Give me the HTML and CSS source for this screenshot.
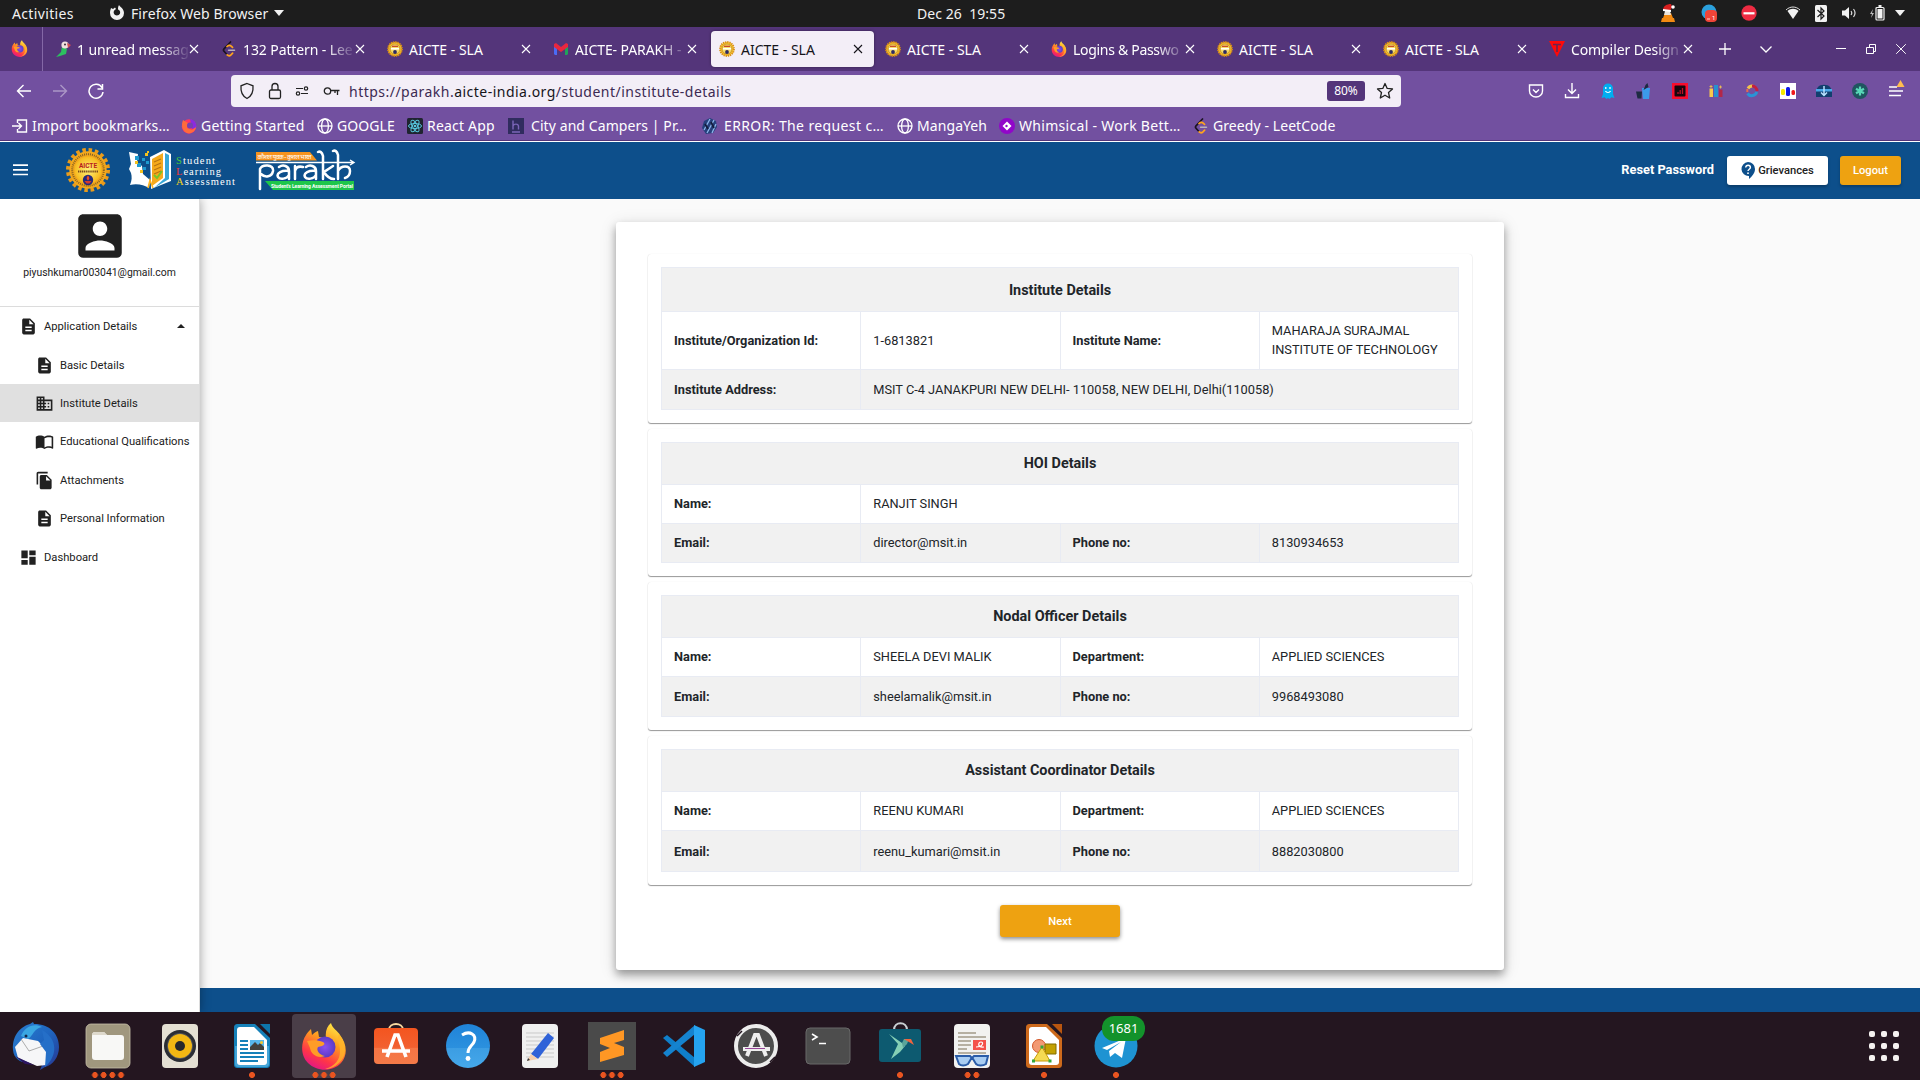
FILE: index.html
```html
<!DOCTYPE html>
<html lang="en">
<head>
<meta charset="utf-8">
<title>AICTE - SLA</title>
<link rel="stylesheet" href="styles.css">
</head>
<body>
<svg class="defs" width="0" height="0" aria-hidden="true">
  <defs>
    <linearGradient id="gFox" x1=".8" y1="0" x2=".3" y2="1"><stop offset="0" stop-color="#fff14a"/><stop offset=".4" stop-color="#ff9a1f"/><stop offset=".75" stop-color="#ff3647"/><stop offset="1" stop-color="#e31587"/></linearGradient>
    <radialGradient id="gOrb"><stop offset="0" stop-color="#8a4ff0"/><stop offset="1" stop-color="#5b3bc4"/></radialGradient>
    <linearGradient id="gBlue" x1="0" y1="0" x2="0" y2="1"><stop offset="0" stop-color="#1f83d8"/><stop offset=".54" stop-color="#2b90de"/><stop offset=".55" stop-color="#3c9de3"/><stop offset="1" stop-color="#45a8ea"/></linearGradient>
    <linearGradient id="gOrange" x1="0" y1="0" x2="0" y2="1"><stop offset="0" stop-color="#f4551f"/><stop offset=".54" stop-color="#f26030"/><stop offset=".55" stop-color="#f57444"/><stop offset="1" stop-color="#f47a48"/></linearGradient>
    <radialGradient id="gGold"><stop offset="0" stop-color="#fff27a"/><stop offset="1" stop-color="#f7b91d"/></radialGradient>
    <linearGradient id="gBird" x1="0" y1="0" x2="1" y2="1"><stop offset="0" stop-color="#2a7fd0"/><stop offset=".5" stop-color="#1f66c0"/><stop offset="1" stop-color="#27348f"/></linearGradient>
  </defs>
  <symbol id="fox" viewBox="0 0 48 48">
    <path d="M31 1c1 5 7 8 9 12 7 9 8 20 1 28-8 9-24 9-33 0C0 33 1 20 6 13c1-2 3-4 5-6l1 6c2-2 3-3 6-4l1 6c3 0 5 0 7 1-1-6 1-12 5-15z" fill="url(#gFox)"/>
    <path d="M39 12c8 10 8 22 0 29-4 4-9 6-14 6 10-3 15-9 15-18 0-8-4-11-1-17z" fill="#ffb52a" opacity=".8"/>
    <circle cx="25" cy="25" r="10.500" fill="url(#gOrb)"/>
    <path d="M7 19c6-1 11-1 16 1 2 1 2 3-1 4l-4 1c-2 3 1 8 7 9-8 3-14-2-15-8z" fill="#ff9c27"/>
  </symbol>
  <symbol id="aicte-s" viewBox="0 0 16 16">
    <circle cx="8" cy="8" r="7" fill="#f5c02a" stroke="#d88d16" stroke-width="1.800" stroke-dasharray="1.300 .9"/>
    <circle cx="8" cy="8" r="5" fill="#f7dc6a" stroke="#c08a2a" stroke-width=".8"/>
    <path d="M5 5.300h6" stroke="#c33822" stroke-width="1.200"/><path d="M4 7.800h8" stroke="#fff" stroke-width="1.500"/><circle cx="8" cy="11" r="1.900" fill="#2d2a63"/>
  </symbol>
  <symbol id="leet" viewBox="0 0 16 16"><path d="M9.500 1 3 7.800c-.7.800-.7 1.600 0 2.400L5.500 13" fill="none" stroke="#1b1320" stroke-width="1.700" stroke-linecap="round"/><path d="M6 5.500c1.500-1.400 3-1.400 4.200-.3l1.300 1.200M11.600 12.200 10 13.800c-1.200 1.200-2.700 1.100-3.800.1" fill="none" stroke="#ffa41c" stroke-width="1.700" stroke-linecap="round"/><path d="M7.500 9.300h6" stroke="#b9b1bd" stroke-width="1.500" stroke-linecap="round"/></symbol>
  <symbol id="x" viewBox="0 0 10 10"><path d="M1 1l8 8M9 1L1 9" fill="none" stroke="currentColor" stroke-width="1.100"/></symbol>
  <symbol id="globe" viewBox="0 0 16 16"><g fill="none" stroke="currentColor" stroke-width="1.300"><circle cx="8" cy="8" r="7"/><ellipse cx="8" cy="8" rx="3.400" ry="7"/><path d="M1 8h14"/></g></symbol>
  <symbol id="doc" viewBox="0 0 24 24"><path fill="currentColor" d="M14 2H6c-1.100 0-2 .9-2 2v16c0 1.100.9 2 2 2h12c1.100 0 2-.9 2-2V8l-6-6zm2 16H8v-2h8v2zm0-4H8v-2h8v2zm-3-5V3.500L18.500 9H13z"/></symbol>
</svg>

<div class="topbar">
  <span class="activities">Activities</span>
  <svg class="tb-app" viewBox="0 0 16 16" width="16" height="16"><path fill="#f2f2f2" d="M2 3l2 1 2-1.500L7 4c-2 1-3 3-2 4.800C6 11 10 11 11 8.500c.7-2-.5-3.500-2-4C9 3 9 1.500 10 0c1 2 5 3.500 5 8a7 7 0 0 1-14 0c0-2 .5-3.500 1-5z"/></svg>
  <span class="appname">Firefox Web Browser</span>
  <svg class="caret" width="10" height="6" viewBox="0 0 10 6"><path fill="#f2f2f2" d="M0 0h10L5 6z"/></svg>
  <span class="clock">Dec 26  19:55</span>
  <div class="status">
    <svg width="16" height="18" viewBox="0 0 16 18"><path fill="#f28a12" d="M2 14h12l1 4H1zM5 9h6l2 5H3z"/><path fill="#e9e4dc" d="M5 7h5l1 4H4z"/><path fill="#d81f1f" d="M3 6c0-4 4-6 8-6l1 3-2 4z"/><path fill="#fff" d="M3 5l8 1v2L3 7z"/><circle cx="13" cy="3" r="1.800" fill="#fff"/></svg>
    <svg width="16" height="18" viewBox="0 0 16 18"><circle cx="8" cy="8" r="7.500" fill="#2ba0dc"/><rect x="4" y="6" width="12" height="12" rx="4" fill="#f04438"/><text x="11" y="15.500" class="mini">1</text><path d="M6 15h3" stroke="#fff" stroke-width=".8"/></svg>
    <svg width="16" height="16" viewBox="0 0 16 16"><circle cx="8" cy="8" r="7.700" fill="#ed2b42"/><path d="M2.500 8.300h11" stroke="#fff" stroke-width="2.200"/></svg>
    <svg width="16" height="14" viewBox="0 0 16 14"><path fill="none" stroke="#ddd" d="M1 4c4-4 10-4 14 0"/><path fill="#f2f2f2" d="M2.500 5c3-3 8-3 11 0L8 13z"/></svg>
    <svg width="12" height="17" viewBox="0 0 12 17"><rect width="12" height="17" rx="1.500" fill="#f2f2f2"/><path fill="none" stroke="#1d1d1d" stroke-width="1.200" d="M2.500 5l6.500 6-3 3V3l3 3-6.500 6"/></svg>
    <svg width="16" height="14" viewBox="0 0 16 14"><path fill="#f2f2f2" d="M1 4.500h3L8 1v12L4 9.500H1z"/><path fill="none" stroke="#ddd" stroke-width="1.200" d="M10 5c1 1.300 1 2.700 0 4M12.500 3c2 2.600 2 5.400 0 8"/></svg>
    <svg width="16" height="16" viewBox="0 0 16 16"><path fill="#bbb" d="M4 4L1 9h2l-1 4 3-5H3z"/><rect x="7" y="2.500" width="8" height="12.500" rx="1" fill="none" stroke="#f2f2f2" stroke-width="1.200"/><path fill="#f2f2f2" d="M8.500 4h5v9.500h-5zM9.500 0h3v2h-3z"/></svg>
    <svg width="10" height="6" viewBox="0 0 10 6"><path fill="#f2f2f2" d="M0 0h10L5 6z"/></svg>
  </div>
</div>

<div class="tabs">
  <div class="pinned"><svg width="17" height="17"><use href="#fox"/></svg></div>
  <div class="tab"><svg class="fav" viewBox="0 0 16 16"><path fill="#2dbf60" d="M7 5l5 3-1 5-6 2-4 1 5-5z"/><circle cx="10" cy="4" r="3.600" fill="#f1dfe0"/><path fill="#d44b55" d="M12 2l4 2-3 3z"/><circle cx="10" cy="3.500" r="1" fill="#3a2a3a"/></svg><span class="title fade">1 unread messag</span><svg class="close"><use href="#x"/></svg></div>
  <div class="tab"><svg class="fav"><use href="#leet"/></svg><span class="title fade">132 Pattern - Lee</span><svg class="close"><use href="#x"/></svg></div>
  <div class="tab"><svg class="fav"><use href="#aicte-s"/></svg><span class="title">AICTE - SLA</span><svg class="close"><use href="#x"/></svg></div>
  <div class="tab"><svg class="fav" viewBox="0 0 16 16"><path fill="#4a6cf5" d="M1 4h3v10H2L1 13z"/><path fill="#20a35a" d="M12 7l3-3v9l-1 1h-2z"/><path fill="#e9273f" d="M1 3l2-1 5 4 5-4 2 1v3l-7 5-7-5z"/></svg><span class="title fade">AICTE- PARAKH -</span><svg class="close"><use href="#x"/></svg></div>
  <div class="tab active"><svg class="fav"><use href="#aicte-s"/></svg><span class="title">AICTE - SLA</span><svg class="close"><use href="#x"/></svg></div>
  <div class="tab"><svg class="fav"><use href="#aicte-s"/></svg><span class="title">AICTE - SLA</span><svg class="close"><use href="#x"/></svg></div>
  <div class="tab"><svg class="fav"><use href="#fox"/></svg><span class="title fade tight">Logins &amp; Passwo</span><svg class="close"><use href="#x"/></svg></div>
  <div class="tab"><svg class="fav"><use href="#aicte-s"/></svg><span class="title">AICTE - SLA</span><svg class="close"><use href="#x"/></svg></div>
  <div class="tab"><svg class="fav"><use href="#aicte-s"/></svg><span class="title">AICTE - SLA</span><svg class="close"><use href="#x"/></svg></div>
  <div class="tab"><svg class="fav" viewBox="0 0 16 16"><path fill="#ff0909" d="M0 0h16L8 16z"/><path d="M4 3.500h8M8 3.500V11" stroke="#6b2350" stroke-width="1.600"/></svg><span class="title fade">Compiler Design</span><svg class="close"><use href="#x"/></svg></div>
  <div class="winctl">
    <svg width="12" height="12" viewBox="0 0 12 12"><path d="M6 0v12M0 6h12" stroke="#fff" stroke-width="1.300"/></svg>
    <svg width="12" height="12" viewBox="0 0 12 12"><path d="M.5 3.500L6 9l5.500-5.500" fill="none" stroke="#fff" stroke-width="1.300"/></svg>
    <svg width="12" height="12" viewBox="0 0 12 12"><path d="M1 5.500h10" stroke="#fff"/></svg>
    <svg width="12" height="12" viewBox="0 0 12 12"><path d="M1.500 4.500h7v6h-7zM4.500 4.500v-3h6v7h-2" fill="none" stroke="#fff"/></svg>
    <svg width="12" height="12" viewBox="0 0 10 10"><path d="M1 1l8 8M9 1L1 9" stroke="#fff" stroke-width=".8"/></svg>
  </div>
</div>

<div class="navbar">
  <div class="navbtns">
    <svg width="16" height="16" viewBox="0 0 16 16"><path d="M15 8H2M7.500 2L1.500 8l6 6" fill="none" stroke="#fff" stroke-width="1.400"/></svg>
    <svg width="16" height="16" viewBox="0 0 16 16" opacity=".4"><path d="M1 8h13M8.500 2l6 6-6 6" fill="none" stroke="#fff" stroke-width="1.400"/></svg>
    <svg width="16" height="16" viewBox="0 0 16 16"><path d="M14 4.500A7 7 0 1 0 15 9M14.500 1v5h-5" fill="none" stroke="#fff" stroke-width="1.500"/></svg>
  </div>
  <div class="urlbar">
    <div class="urlicons">
      <svg width="16" height="18" viewBox="0 0 16 18"><path d="M8 1.500l6 2.300c.5 6-1.500 10.500-6 12.700-4.500-2.200-6.500-6.700-6-12.700z" fill="none" stroke="#222" stroke-width="1.300"/></svg>
      <svg width="14" height="18" viewBox="0 0 14 18"><rect x="1.500" y="8" width="11" height="8.500" rx="1.500" fill="none" stroke="#222" stroke-width="1.300"/><path d="M4 8V4.500a3 3 0 0 1 6 0V8" fill="none" stroke="#222" stroke-width="1.300"/></svg>
      <svg width="16" height="14" viewBox="0 0 16 14"><path d="M2 4.500h7M7 9.500h7" stroke="#222" stroke-width="1.200"/><circle cx="12" cy="4.500" r="1.700" fill="none" stroke="#222" stroke-width="1.200"/><circle cx="4" cy="9.500" r="1.700" fill="none" stroke="#222" stroke-width="1.200"/></svg>
      <svg width="17" height="14" viewBox="0 0 17 14"><circle cx="4.500" cy="7" r="3.200" fill="none" stroke="#222" stroke-width="1.300"/><path d="M8 6.500h8.500M14.500 6.500V11M12 6.500V9" fill="none" stroke="#222" stroke-width="1.300"/></svg>
    </div>
    <span class="url">https://parakh.<b>aicte-india.org</b>/student/institute-details</span>
    <span class="zoomlevel">80%</span>
    <svg class="star" width="18" height="18" viewBox="0 0 18 18"><path d="M9 1.500l2.200 4.900 5.300.5-4 3.600 1.200 5.500L9 13.200 4.300 16l1.200-5.500-4-3.600 5.300-.5z" fill="none" stroke="#222" stroke-width="1.300" stroke-linejoin="round"/></svg>
  </div>
  <div class="exts">
    <svg viewBox="0 0 16 16"><path d="M1.500 2h13v6a6.500 6 0 0 1-13 0zM5 6.500l3 3 3-3" fill="none" stroke="#fff" stroke-width="1.400"/></svg>
    <svg viewBox="0 0 16 16"><path d="M8 0v10M4 6.500L8 10.500l4-4M1.500 11v3.500h13V11" fill="none" stroke="#fff" stroke-width="1.400"/></svg>
    <svg viewBox="0 0 16 16"><path d="M3 5.500a5 5 0 0 1 10 0V11l1.500 4-3-.7L9.500 16 8 15l-1.500 1-2-1.700-3 .7L3 11z" fill="#00aef0"/><path d="M5.800 4v2M10 4v2M5.500 8c1 2 4 2 5 0" stroke="#fff" fill="none" stroke-width="1.200"/></svg>
    <svg viewBox="0 0 16 16"><path d="M6 5h8l-1 11H7z" fill="#3b9bea"/><path d="M0 8.500h6l-.5 7h-4zM9.500 2l2-2 1 4-5 3z" fill="#1d2b42"/></svg>
    <svg viewBox="0 0 16 16"><path fill="#f70d2d" d="M0 0h16v16H0z"/><rect x="2.500" y="2.500" width="11" height="11" rx="1" fill="#16060c"/><path d="M6 11V9M8.200 11V7M10.500 11V5" stroke="#b81228" stroke-width="1.300"/></svg>
    <svg viewBox="0 0 16 16"><path d="M1.500 5.500H5V14H1.500z" fill="#f8c84c"/><path d="M6 2h4v12H6z" fill="#2691d0"/><path d="M11 6.500h3.500V14H11z" fill="#b32748"/><path d="M1.500 3.500h3M3 2v3M11 4h3M12.500 2.500v3" stroke="#f8c84c" stroke-width=".8"/></svg>
    <svg viewBox="0 0 16 16" fill="none" stroke-width="3"><path d="M4 5.500A5 5 0 0 1 9 3" stroke="#f2c34c"/><path d="M8 3a5 5 0 0 1 5 5" stroke="#c5203f"/><path d="M12.800 9a5.300 5.300 0 0 1-9.300 1.500" stroke="#2a93d5"/><path d="M3.300 9V6" stroke="#e76a50" stroke-width="2"/></svg>
    <svg viewBox="0 0 16 16"><path fill="#fff" d="M0 0h16v16H0z"/><rect x="1" y="6" width="4" height="6" rx="1.500" fill="#f5e900"/><rect x="6" y="4" width="4" height="9" rx="1.500" fill="#0c18e8"/><rect x="11.500" y="7" width="3.500" height="5" rx="1.500" fill="#f01919"/></svg>
    <svg viewBox="0 0 16 16"><path d="M2 4c2-3 10-3 12 0l2 3v7H0V7z" fill="#123f6e"/><path d="M0 6h16v2.500H0z" fill="#4aa9ea"/><path d="M8 3v9M5 9.500l3 3 3-3" stroke="#b9e2ff" fill="none" stroke-width="1.500"/></svg>
    <svg viewBox="0 0 16 16"><circle cx="8" cy="8" r="8" fill="#1f5560"/><path d="M8 3.500v9M4 5.700l8 4.600M12 5.700l-8 4.600" stroke="#58d8b8" stroke-width="2.200"/></svg>
    <svg class="menuic" viewBox="0 0 18 18"><path d="M2 7h8M2 11h14M2 15.500h12" stroke="#fff" stroke-width="1.400"/><path d="M13.500 0l4 7h-8z" fill="#ffbd4f"/></svg>
  </div>
</div>

<div class="bookmarks">
  <div class="bm b1"><svg viewBox="0 0 16 16"><path d="M5.500 5V2h9v12h-9v-3M0 8h9.500M6.500 5l3 3-3 3" fill="none" stroke="#fff" stroke-width="1.400"/></svg><span>Import bookmarks…</span></div>
  <div class="bm b2"><svg viewBox="0 0 16 16"><circle cx="8" cy="8.500" r="7.200" fill="#ff3663"/><path d="M9 1c5 1 7 5 6 9l-4 1z" fill="#8a2be0"/><path d="M2 2l5 3-1 5 5 2 4-3c-1 5-5 7-9 6-5-2-6-8-4-13z" fill="#ff6b3c"/><circle cx="9" cy="7.500" r="3" fill="#7542b0"/></svg><span>Getting Started</span></div>
  <div class="bm b3"><svg><use href="#globe"/></svg><span>GOOGLE</span></div>
  <div class="bm b4"><svg viewBox="0 0 16 16"><rect width="16" height="16" rx="1.500" fill="#1f2430"/><g fill="none" stroke="#57c7de"><ellipse cx="8" cy="8" rx="6.500" ry="2.500"/><ellipse cx="8" cy="8" rx="6.500" ry="2.500" transform="rotate(60 8 8)"/><ellipse cx="8" cy="8" rx="6.500" ry="2.500" transform="rotate(120 8 8)"/></g><circle cx="8" cy="8" r="1.300" fill="#57c7de"/></svg><span>React App</span></div>
  <div class="bm b5"><svg viewBox="0 0 16 16"><path fill="#302c5e" d="M0 0h16v16H0z"/><path d="M5 2.500v9M5 8c1-2.500 5-2.500 5.500 0v3.500M4 14h8" fill="none" stroke="#7b65b8" stroke-width="1.400"/></svg><span>City and Campers | Pr…</span></div>
  <div class="bm b6"><svg viewBox="0 0 16 16"><path d="M2 3l6-3 6 3 1 6-4 6-7 1-4-6z" fill="#26407c"/><path d="M2 12L8 1M5 15l7-13M10 15l4-9" stroke="#8cb4ea" stroke-width="1.300"/><path d="M3 6l3 5M9 4l3 6" stroke="#131c3d" stroke-width="1.800"/></svg><span>ERROR: The request c…</span></div>
  <div class="bm b7"><svg><use href="#globe"/></svg><span>MangaYeh</span></div>
  <div class="bm b8"><svg viewBox="0 0 16 16"><circle cx="8" cy="8" r="8" fill="#9106c9"/><path d="M8 3.500L12.500 8 8 12.500 3.500 8z" fill="#fff"/><circle cx="7.500" cy="8" r="1.200" fill="#9106c9"/></svg><span>Whimsical - Work Bett…</span></div>
  <div class="bm b9"><svg><use href="#leet"/></svg><span>Greedy - LeetCode</span></div>
</div>

<div class="site">
  <header class="sitehead">
    <svg class="burger" width="15" height="12" viewBox="0 0 15 12"><path d="M0 1.200h15M0 5.800h15M0 10.500h15" stroke="#fff" stroke-width="1.700"/></svg>
    <svg class="logo-aicte" width="44" height="44" viewBox="0 0 44 44">
      <circle cx="22" cy="22" r="20" fill="none" stroke="#e99b1b" stroke-width="4" stroke-dasharray="3.500 2.783"/>
      <circle cx="22" cy="22" r="18.700" fill="#f2a81d"/>
      <circle cx="22" cy="22" r="15.800" fill="none" stroke="#8a6220" stroke-width="2" stroke-dasharray="1 1"/>
      <circle cx="22" cy="22" r="13.500" fill="url(#gGold)"/>
      <text x="22" y="19.500" text-anchor="middle" class="seal-name">AICTE</text>
      <path d="M12 23.500h20" stroke="#7a4a1c" stroke-width="1.800" stroke-dasharray="1.300 .6"/>
      <circle cx="22" cy="32" r="5.200" fill="#252a7c"/><path d="M22 27.500c2 2 1.500 4 0 5-1.500-1-2-3 0-5z" fill="#f04a24"/><path d="M18.500 33h7l-2 2.500h-3z" fill="#d33a2b"/>
    </svg>
    <svg class="logo-sla" width="110" height="42" viewBox="0 0 110 42">
      <path d="M1 3l9 2-1 8 5 4 1 8 7 6-1 8C16 36 9 34 2 36c2-5 2-8 1-12l-2-4 2-5z" fill="#fff"/>
      <path d="M7 7h4v4H7zM14 9h3v3h-3zM9 14h4v4H9zM18 12h3v3h-3zM15 18h3v3h-3z" fill="#1e9bd0"/><path d="M17 4h3v3h-3zM7 12h3v3H7zM12 21h3v3h-3zM19 2h2v2h-2z" fill="#f4c21f"/>
      <path d="M22 8L36 1l7 4v27l-20 8z" fill="#fff"/><path d="M24 10l11-6v25l-11 8z" fill="#f5a91c"/><path d="M37 4l4 2v24l-15 9 11-10z" fill="#37a7d7"/><path d="M26 13l7-3M26 17l7-3M26 21l7-3M26 25l7-3" stroke="#b87412" stroke-width="1.200"/><path d="M26 26l3 3 5-7" stroke="#76c529" stroke-width="2" fill="none"/><path d="M20 39l2-8 3 8" fill="none" stroke="#ffb31a" stroke-width="1.500"/>
      <g class="sla-words"><text x="48" y="15" textLength="39"><tspan fill="#49c83a">S</tspan>tudent</text><text x="48" y="25.500" textLength="45"><tspan fill="#f0353a">L</tspan>earning</text><text x="48" y="35.500" textLength="59"><tspan fill="#f5d21e">A</tspan>ssessment</text></g>
    </svg>
    <svg class="logo-parakh" width="100" height="42" viewBox="0 0 100 42">
      <path d="M0 3h54l7 8.500H0z" fill="#f6931e"/><text x="1" y="9.500" class="pk-hi" textLength="54">कौशल युवक - कुशल भारत</text>
      <path d="M0 13.500h98M94 11l4 2.500-4 2.500" fill="none" stroke="#fff" stroke-width="1.400"/>
      <g fill="none" stroke="#fff" stroke-width="2.500" stroke-linecap="round"><path d="M4 40V20c2-5 14-5 13 2-1 6-8 7-12 3M23 18c4-3 10-1 10 4v8M33 22c-7-1-13 2-11 6 2 3 9 2 11-2M39 30V17M39 22c1-4 4-5 8-4M50 18c4-3 10-1 10 4v8M60 22c-7-1-13 2-11 6 2 3 9 2 11-2M67 30V7c-1-4-3-5-5-4M77 17l-9 6c3 5 6 7 10 7M82 30V6c-1-4-3-5-5-4M82 22c3-6 12-6 12 0 0 4-2 6-5 7"/></g>
      <path d="M9 32h89v9H17z" fill="#1ec64a"/><text x="15" y="38.600" class="pk-en" textLength="82">Student's Learning Assessment Portal</text>
    </svg>
    <nav class="siteactions">
      <a class="reset">Reset Password</a>
      <button class="btn white"><svg width="14" height="17" viewBox="0 0 14 17"><path fill="#0d4f8b" d="M7 0a7 7 0 0 1 7 7c0 4-3 7.500-6 10v-3A7 7 0 1 1 7 0z"/><path d="M4.700 5.500c.2-3 4.700-3 4.700 0C9.400 7.200 7 7.200 7 9" fill="none" stroke="#fff" stroke-width="1.400"/><circle cx="7" cy="11.200" r=".9" fill="#fff"/></svg><span>Grievances</span></button>
      <button class="btn amber">Logout</button>
    </nav>
  </header>
  <div class="sitebody">
    <aside class="side">
      <div class="profile">
        <svg width="58" height="58" viewBox="0 0 24 24"><path fill="#212121" d="M3 5v14c0 1.100.89 2 2 2h14c1.100 0 2-.9 2-2V5c0-1.100-.9-2-2-2H5c-1.110 0-2 .9-2 2zm12 4c0 1.660-1.340 3-3 3s-3-1.340-3-3 1.340-3 3-3 3 1.340 3 3zm-9 8c0-2 4-3.100 6-3.100s6 1.100 6 3.100v1H6v-1z"/></svg>
        <span>piyushkumar003041@gmail.com</span>
      </div>
      <ul class="menu">
        <li><svg class="mi"><use href="#doc"/></svg><span>Application Details</span><svg class="up" width="8" height="4" viewBox="0 0 8 4"><path fill="#212121" d="M0 4l4-4 4 4z"/></svg></li>
        <li class="sub"><svg class="mi"><use href="#doc"/></svg><span>Basic Details</span></li>
        <li class="sub on"><svg class="mi" viewBox="0 0 24 24"><path fill="currentColor" d="M12 7V3H2v18h20V7H12zM6 19H4v-2h2v2zm0-4H4v-2h2v2zm0-4H4V9h2v2zm0-4H4V5h2v2zm4 12H8v-2h2v2zm0-4H8v-2h2v2zm0-4H8V9h2v2zm0-4H8V5h2v2zm10 12h-8v-2h2v-2h-2v-2h2v-2h-2V9h8v10zm-2-8h-2v2h2v-2zm0 4h-2v2h2v-2z"/></svg><span>Institute Details</span></li>
        <li class="sub"><svg class="mi" viewBox="0 0 24 24"><path fill="currentColor" d="M21 5c-1.110-.35-2.330-.5-3.500-.5-1.950 0-4.050.4-5.500 1.500-1.450-1.100-3.550-1.500-5.500-1.500S2.450 4.900 1 6v14.650c0 .25.25.5.5.5.1 0 .15-.05.25-.05C3.100 20.450 5.050 20 6.500 20c1.950 0 4.050.4 5.500 1.500 1.350-.85 3.800-1.500 5.500-1.500 1.650 0 3.350.3 4.750 1.050.1.050.15.050.25.050.25 0 .5-.25.5-.5V6c-.6-.45-1.250-.75-2-1zm0 13.500c-1.100-.35-2.300-.5-3.500-.5-1.700 0-4.150.65-5.500 1.500V8c1.350-.85 3.800-1.500 5.500-1.500 1.200 0 2.400.15 3.500.5v11.500z"/></svg><span>Educational Qualifications</span></li>
        <li class="sub"><svg class="mi" viewBox="0 0 24 24"><path fill="currentColor" d="M16 1H4c-1.100 0-2 .9-2 2v14h2V3h12V1zm-1 4l6 6v10c0 1.100-.9 2-2 2H7.990C6.890 23 6 22.100 6 21l.01-14c0-1.100.89-2 1.990-2h7zm-1 7h5.500L14 6.500V12z"/></svg><span>Attachments</span></li>
        <li class="sub"><svg class="mi"><use href="#doc"/></svg><span>Personal Information</span></li>
        <li><svg class="mi" viewBox="0 0 24 24"><path fill="currentColor" d="M3 13h8V3H3v10zm0 8h8v-6H3v6zm10 0h8V11h-8v10zm0-18v6h8V3h-8z"/></svg><span>Dashboard</span></li>
      </ul>
    </aside>
    <main class="content">
      <section class="sheet">
        <div class="card"><table class="inst">
          <tr class="head g"><th colspan="4">Institute Details</th></tr>
          <tr class="tall"><th>Institute/Organization Id:</th><td>1-6813821</td><th>Institute Name:</th><td class="two">MAHARAJA SURAJMAL INSTITUTE OF TECHNOLOGY</td></tr>
          <tr class="g"><th>Institute Address:</th><td colspan="3">MSIT C-4 JANAKPURI NEW DELHI- 110058, NEW DELHI, Delhi(110058)</td></tr>
        </table></div>
        <div class="card"><table class="hoi">
          <tr class="head g"><th colspan="4">HOI Details</th></tr>
          <tr><th>Name:</th><td colspan="3">RANJIT SINGH</td></tr>
          <tr class="g"><th>Email:</th><td>director@msit.in</td><th>Phone no:</th><td>8130934653</td></tr>
        </table></div>
        <div class="card"><table class="nodal">
          <tr class="head g"><th colspan="4">Nodal Officer Details</th></tr>
          <tr><th>Name:</th><td>SHEELA DEVI MALIK</td><th>Department:</th><td>APPLIED SCIENCES</td></tr>
          <tr class="g"><th>Email:</th><td>sheelamalik@msit.in</td><th>Phone no:</th><td>9968493080</td></tr>
        </table></div>
        <div class="card"><table class="coord">
          <tr class="head g"><th colspan="4">Assistant Coordinator Details</th></tr>
          <tr><th>Name:</th><td>REENU KUMARI</td><th>Department:</th><td>APPLIED SCIENCES</td></tr>
          <tr class="g last"><th>Email:</th><td>reenu_kumari@msit.in</td><th>Phone no:</th><td>8882030800</td></tr>
        </table></div>
        <button class="next">Next</button>
      </section>
      <footer class="foot"></footer>
    </main>
  </div>
</div>

<div class="dock">
  <div class="app"><svg viewBox="0 0 48 48"><path d="M1 28C0 12 10 4 18 2l3-2 1 2c16 0 25 10 25 23 0 10-6 18-14 20l-5 3 2-5-10-3C10 42 2 38 1 28z" fill="url(#gBird)"/><path d="M9 14c4-10 13-13 21-9-8 1-9 9-14 12z" fill="#3aa6e2"/><path d="M3 25l8-9 15 3 9 9-1 15-9 1-19-8z" fill="#f6f6f8"/><path d="M9 17l8 12 17-6" fill="none" stroke="#999" stroke-width=".8"/><path d="M30 8c14 8 16 22 6 34l-3 3 1-15-6-8 4-4z" fill="#256fc8"/><path d="M3 34l19 9-9-1z" fill="#2d1560"/><circle cx="14" cy="14" r="1.500" fill="#14264b"/></svg></div>
  <div class="app"><svg viewBox="0 0 48 48"><rect x="2" y="2" width="44" height="44" rx="5" fill="#a0977e" stroke="#c8c0aa" stroke-width=".8"/><path d="M8 14c0-3 1-4 3-4h9l3 3h14c2 0 3 1 3 3v19c0 2-1 3-3 3H11c-2 0-3-1-3-3z" fill="#f8f8f6"/><path d="M8 14c0-3 1-4 3-4h9l3 3H8z" fill="#ded9cc"/></svg><i class="dots n4"></i></div>
  <div class="app"><svg viewBox="0 0 48 48"><rect x="6" y="2" width="36" height="44" rx="4" fill="#e4dfd3"/><circle cx="24" cy="24" r="16" fill="#2b2d34"/><circle cx="24" cy="24" r="12" fill="#f2b713"/><circle cx="24" cy="24" r="12.500" fill="none" stroke="#fff3" stroke-width="1"/><circle cx="24" cy="24" r="5" fill="#26272c"/></svg></div>
  <div class="app"><svg viewBox="0 0 48 48"><path d="M6 6c0-3 1-4 4-4h17l15 14v26c0 3-1 4-4 4H10c-3 0-4-1-4-4z" fill="#1681b9"/><path d="M7 24h34v18c0 2-1 3-3 3H10c-2 0-3-1-3-3z" fill="#45a5d8"/><path d="M9 8c0-2 1-3 3-3h14l13 13v22c0 2-1 3-3 3H12c-2 0-3-1-3-3z" fill="#fff"/><path d="M32 2h10v10z" fill="#0e75aa"/><path d="M12 19h8M12 23h8M12 27h8M12 31h24M12 35h24M12 39h18" stroke="#1681b9" stroke-width="2"/><path d="M22 18h14v10H22z" fill="#58b8ea"/><path d="M22 28v-3l5-5 3 3 2-2 4 4v3z" fill="#43423c"/><circle cx="33.500" cy="20.500" r="1.500" fill="#f6c52c"/></svg><i class="dots n1"></i></div>
  <div class="app current"><svg><use href="#fox"/></svg><i class="dots n3"></i></div>
  <div class="app"><svg viewBox="0 0 48 48"><path d="M17 8c0-8 14-8 14 0" fill="none" stroke="#f8d9a0" stroke-width="2"/><rect x="2" y="6" width="44" height="36" rx="4" fill="url(#gOrange)"/><path d="M15 35l8-22h3l8 22M10 29h28" fill="none" stroke="#fff" stroke-width="3.600"/></svg></div>
  <div class="app"><svg viewBox="0 0 48 48"><circle cx="24" cy="24" r="22" fill="url(#gBlue)"/><path d="M18 13c8-5 15 0 12 7-2 4-6 5-6 11" fill="none" stroke="#fff" stroke-width="3"/><circle cx="24" cy="36.500" r="2.400" fill="#fff"/></svg></div>
  <div class="app"><svg viewBox="0 0 48 48"><rect x="6" y="2" width="36" height="44" rx="4" fill="#f0f0f0"/><path d="M10 11h28M10 15h28M10 19h28M10 23h28M10 27h28M10 31h28M10 35h28" stroke="#c9c9c9"/><path d="M32 11l6 5-16 21-7-5z" fill="#2f62d8"/><path d="M15 32l7 5-11 2z" fill="#f5cfae"/><path d="M12 36l2 2-3 1z" fill="#333"/></svg></div>
  <div class="app"><svg viewBox="0 0 48 48"><path fill="#4a4a4a" d="M0 0h48v48H0z"/><path d="M12 16l24-8v10l-10 3 10 4v8l-24 7V30l10-4-10-4z" fill="#ff9724"/></svg><i class="dots n3"></i></div>
  <div class="app"><svg viewBox="0 0 48 48"><path d="M3 16l4-3 28 23v9z" fill="#0f7fca"/><path d="M3 31l4 4L35 12V3z" fill="#1583cf"/><path d="M34 3l11 5v32l-11 5z" fill="#25a3f0"/></svg></div>
  <div class="app"><svg viewBox="0 0 48 48"><circle cx="24" cy="24" r="20" fill="#4d4d4d" stroke="#ececec" stroke-width="4"/><path d="M15 34l8-21h3l8 21M11 27h27" fill="none" stroke="#eee" stroke-width="4"/><path d="M13 26.500h20" stroke="#97459a" stroke-width="1"/><path d="M5 14l5-5M38 40l5-5" stroke="#231520" stroke-width="1.500"/></svg></div>
  <div class="app"><svg viewBox="0 0 48 48"><rect x="2" y="6" width="44" height="36" rx="4" fill="#4d4d4d" stroke="#696969"/><path d="M8 12l5 3-5 3M15 21.500h7" fill="none" stroke="#fff" stroke-width="1.600"/></svg></div>
  <div class="app"><svg viewBox="0 0 48 48"><path d="M18 8c0-9 13-9 13 0" fill="none" stroke="#c9cfd3" stroke-width="2.200"/><rect x="3" y="7" width="42" height="33" rx="3" fill="#0d5a70"/><path d="M13 12l13 9 3 3-5 6-9 7 7-15z" fill="#85cfb5"/><path d="M26 21l2-4h5l-2 5-4 4z" fill="#5aa59a"/><path d="M28 17h7l3 6-5-3z" fill="#f0643e"/></svg><i class="dots n1"></i></div>
  <div class="app"><svg viewBox="0 0 48 48"><rect x="6" y="2" width="36" height="44" rx="4" fill="#f2f2f0"/><path d="M10 11h18M10 15h28M10 19h13M10 23h13M10 27h9M10 31h28" stroke="#b6b0a2" stroke-width="1.800"/><path d="M25 18h13v10H25z" fill="#f4514a"/><path d="M28 25c7 0 8-5 5-5s-4 6 3 5" fill="none" stroke="#fff" stroke-width="1.200"/><path d="M8 34h14l2 2 2-2h14l-2 8c-3 2-8 2-10 0l-3-5h-2l-3 5c-3 2-7 2-9 0z" fill="#a9cdf2" stroke="#2a5ca8" stroke-width="2"/></svg><i class="dots n2"></i></div>
  <div class="app"><svg viewBox="0 0 48 48"><path d="M6 6c0-3 1-4 4-4h17l15 14v26c0 3-1 4-4 4H10c-3 0-4-1-4-4z" fill="#cd6a1c"/><path d="M9 8c0-2 1-3 3-3h14l13 13v22c0 2-1 3-3 3H12c-2 0-3-1-3-3z" fill="#fff"/><path d="M32 2h10v10z" fill="#b9560f"/><circle cx="19" cy="24" r="6.500" fill="#f29a74" stroke="#d4582a"/><path d="M25 22h11v10H25z" fill="#c3a103" stroke="#826c00"/><path d="M22 25l8 14H13z" fill="#f5da52" stroke="#c79a05"/><path d="M20.500 23.500h3v3h-3zM28.500 37.500h3v3h-3zM12 37.500h3v3h-3z" fill="#33a83a"/></svg><i class="dots n1"></i></div>
  <div class="app"><svg viewBox="0 0 48 48"><circle cx="24" cy="24" r="21.500" fill="#1e93d2"/><path d="M10 26l24-10-4 20-7-5-5 4-1-6 12-9-14 8z" fill="#fff"/></svg><b class="count">1681</b><i class="dots n1"></i></div>
  <svg class="grid" width="32" height="32" viewBox="0 0 32 32"><g fill="#f5f2f0"><rect x="1" y="1" width="6" height="6" rx="2"/><rect x="13" y="1" width="6" height="6" rx="2"/><rect x="25" y="1" width="6" height="6" rx="2"/><rect x="1" y="13" width="6" height="6" rx="2"/><rect x="13" y="13" width="6" height="6" rx="2"/><rect x="25" y="13" width="6" height="6" rx="2"/><rect x="1" y="25" width="6" height="6" rx="2"/><rect x="13" y="25" width="6" height="6" rx="2"/><rect x="25" y="25" width="6" height="6" rx="2"/></g></svg>
</div>
</body>
</html>
```
FILE: styles.css
```css
* { box-sizing: border-box; }
html, body { margin: 0; height: 100%; }
body {
  width: 1920px; height: 1080px; overflow: hidden;
  display: flex; flex-direction: column;
  font-family: "Noto Sans", "Open Sans", sans-serif;
  font-size: 14px; color: #fff;
}
svg { display: block; flex: none; }
button { font: inherit; border: 0; padding: 0; }
.defs { position: absolute; }

/* desktop top bar */
.topbar {
  height: 27px; background: #1d1d1d; color: #f2f2f2;
  display: grid; grid-template-columns: 97px 22px 143px 643px 1fr auto;
  align-items: center; padding: 0 15px 1px 12px; white-space: nowrap;
}
.clock { white-space: pre; letter-spacing: .05px; }
.activities { letter-spacing: .35px; }
.appname { letter-spacing: .1px; }
.status { display: flex; align-items: center; }
.status svg { margin-left: 12px; }
.status svg:nth-child(2) { margin-left: 25px; }
.status svg:nth-child(3) { margin-left: 24px; }
.status svg:nth-child(4) { margin-left: 28px; }
.status svg:nth-child(5), .status svg:nth-child(6) { margin-left: 14px; }
.status svg:nth-child(8) { margin-left: 10px; }
.mini { font: 6px Roboto, sans-serif; fill: #fff; }

/* tab strip */
.tabs { height: 44px; background: #54357a; display: flex; align-items: center; gap: 3px; }
.pinned { width: 43px; height: 44px; padding: 13px 0 0 11px; border-right: 1px solid #8468a6; margin-right: 1px; }
.tab { width: 163px; height: 36px; flex: none; display: flex; align-items: center; padding: 0 11px 0 8px; border-radius: 4px; }
.tab.active { background: #f3eef7; color: #15141a; box-shadow: 0 0 3px rgba(0,0,0,.4); }
.fav { width: 16px; height: 16px; }
.title { width: 112px; margin: 0 0 0 6px; white-space: nowrap; font-size: 14px; }
.fade { letter-spacing: -.1px; -webkit-mask-image: linear-gradient(90deg, #000 75%, rgba(0,0,0,.12) 98%); mask-image: linear-gradient(90deg, #000 75%, rgba(0,0,0,.12) 98%); }
.fade.tight { letter-spacing: -.3px; }
.close { width: 10px; height: 10px; }
.winctl { display: flex; margin-left: 12px; }
.winctl svg:nth-child(2) { margin-left: 29px; }
.winctl svg:nth-child(3) { margin-left: 63px; }
.winctl svg:nth-child(4), .winctl svg:nth-child(5) { margin-left: 18px; }

/* navigation row */
.navbar { height: 41px; background: #7250a0; display: flex; padding-top: 4px; }
.navbtns { width: 231px; height: 32px; display: flex; gap: 20px; align-items: center; padding-left: 16px; }
.urlbar { width: 1170px; height: 32px; background: #f3eef7; border-radius: 4px; display: flex; align-items: center; padding: 0 7px 0 8px; color: #3c2a52; }
.urlicons { display: flex; align-items: center; gap: 12.500px; width: 110px; }
.url { flex: 1; letter-spacing: .48px; }
.url b { font-weight: 400; color: #15141a; }
.zoomlevel { width: 38px; height: 20px; border-radius: 3px; background: #54357a; color: #fff; font-size: 12px; line-height: 20px; text-align: center; margin-right: 11px; }
.exts { margin-left: 127px; height: 32px; display: flex; align-items: center; gap: 20px; }
.exts svg { width: 16px; height: 16px; }
.exts .menuic { width: 18px; height: 18px; margin: -4px 0 0 -1px; }

/* bookmarks */
.bookmarks { height: 30px; background: #7250a0; border-bottom: 1px solid #fff; box-shadow: inset 0 -1px #54357a; display: flex; align-items: center; padding: 0 0 2px 12px; }
.bm { display: flex; align-items: center; gap: 4px; white-space: nowrap; letter-spacing: .08px; }
.bm svg { width: 16px; height: 16px; }
.b1 { width: 169px; letter-spacing: .2px; } .b2 { width: 136px; letter-spacing: .2px; } .b3 { width: 90px; } .b4 { width: 101px; letter-spacing: .2px; }
.b5 { width: 194px; gap: 7px; } .b6 { width: 195px; gap: 6px; letter-spacing: .38px; } .b7 { width: 102px; } .b8 { width: 194px; letter-spacing: .3px; }

/* web application */
.site { height: 870px; display: flex; flex-direction: column; font-family: Roboto, "Liberation Sans", sans-serif; color: #212529; }
.sitehead { height: 57px; background: #0d4f8b; display: flex; align-items: center; padding: 0 19px 0 13px; }
.burger { margin-bottom: 2px; }
.logo-aicte { margin-left: 38px; margin-bottom: 2px; }
.logo-sla { margin-left: 18px; margin-bottom: 1px; }
.logo-parakh { margin-left: 18px; margin-bottom: 2px; }
.seal-name { font: 700 6.500px Roboto, sans-serif; fill: #b8211c; }
.sla-words { font: 10.500px "Liberation Serif", serif; fill: #fff; }
.pk-hi { font: 6.500px "Noto Sans", sans-serif; fill: #fff; }
.pk-en { font: 700 5px Roboto, sans-serif; fill: #fff; }
.siteactions { margin-left: auto; display: flex; align-items: center; gap: 12px; }
.reset { color: #fff; font-weight: 700; font-size: 12.800px; margin: 0 1px 3px 0; }
.btn { height: 29px; border-radius: 3px; font-size: 11.200px; font-weight: 500; box-shadow: 0 2px 3px rgba(0,0,0,.25); }
.btn.white { width: 101px; background: #fff; color: #212121; display: flex; align-items: center; justify-content: center; gap: 3px; }
.btn.amber { width: 61px; background: #eea211; color: #fff; }
.sitebody { flex: 1; display: flex; }
.side { width: 200px; background: #fff; border-right: 1px solid #dcdcdc; box-shadow: 0 0 10px rgba(0,0,0,.35); font-size: 11.200px; color: #212121; clip-path: inset(0 -16px 0 0); z-index: 1; }
.profile { height: 108px; border-bottom: 1px solid #dcdcdc; display: flex; flex-direction: column; align-items: center; padding-top: 8px; font-size: 10.400px; }
.profile span { line-height: 15px; }
.menu { list-style: none; margin: 0; padding: 0; }
.menu li { height: 38.400px; display: flex; align-items: center; gap: 6px; padding: 0 14px 0 19px; white-space: nowrap; }
.menu li.sub { padding: 0 0 0 35px; }
.menu li span { padding-top: 1px; }
.menu li.on { background: #e0e0e0; }
.mi { width: 19px; height: 19px; margin-top: 1px; }
.up { margin-left: auto; }
.content { flex: 1; background: #fafafa; display: flex; flex-direction: column; align-items: center; padding-top: 23px; }
.sheet { width: 888px; height: 748px; background: #fff; border-radius: 3px; padding: 32px 32px 0; box-shadow: 0 5px 9px rgba(0,0,0,.34), 0 3px 18px rgba(0,0,0,.12); display: flex; flex-direction: column; align-items: center; }
.foot { margin-top: 18px; height: 24px; width: 100%; background: #0d4f8b; }
.card { width: 824px; padding: 13px; border-radius: 3px; box-shadow: 0 1px 1px rgba(0,0,0,.4), 0 0 1px rgba(0,0,0,.12); margin-bottom: 6px; }
table { width: 798px; table-layout: fixed; border-collapse: collapse; font-size: 12.800px; line-height: 19px; }
th, td { border: 1px solid #e8ebf3; padding: 0 12px; height: 39.500px; text-align: left; }
.g { background: #f1f1f1; }
.head th { height: 42px; font-size: 14.400px; text-align: center; }
.inst .head th { height: 44px; padding-top: 2px; }
.tall td, .tall th { height: 58px; }
.tall .two { padding-bottom: 2px; }
.hoi tr:not(.head) > * { height: 39px; }
.nodal tr:not(.head) > * { height: 39.500px; }
.coord tr.last > * { height: 41px; }
.next { width: 120px; height: 32px; margin-top: 14px; border-radius: 3px; background: #eea211; color: #fff; font-size: 11.200px; font-weight: 500; box-shadow: 0 2px 4px rgba(0,0,0,.45); }

/* launcher */
.dock { height: 68px; background: #241620; display: flex; align-items: center; position: relative; }
.app { width: 64px; height: 64px; margin: 0 4px; padding: 8px; position: relative; border-radius: 4px; }
.app svg { width: 48px; height: 48px; }
.app.current { background: #4a3e48; }
.dots { position: absolute; bottom: 0; left: 50%; transform: translateX(-50%); height: 6px; background: radial-gradient(circle, #e95420 2.700px, transparent 3.200px) 0 0 / 8.700px 6px; }
.n1 { width: 8.700px; } .n2 { width: 17.400px; } .n3 { width: 26.100px; } .n4 { width: 34.800px; }
.count { position: absolute; left: 18px; top: 2px; width: 43px; height: 25px; border-radius: 12px; background: #13922b; font-weight: 400; font-size: 13px; line-height: 25px; text-align: center; }
.grid { margin-left: auto; margin-right: 20px; }
```
